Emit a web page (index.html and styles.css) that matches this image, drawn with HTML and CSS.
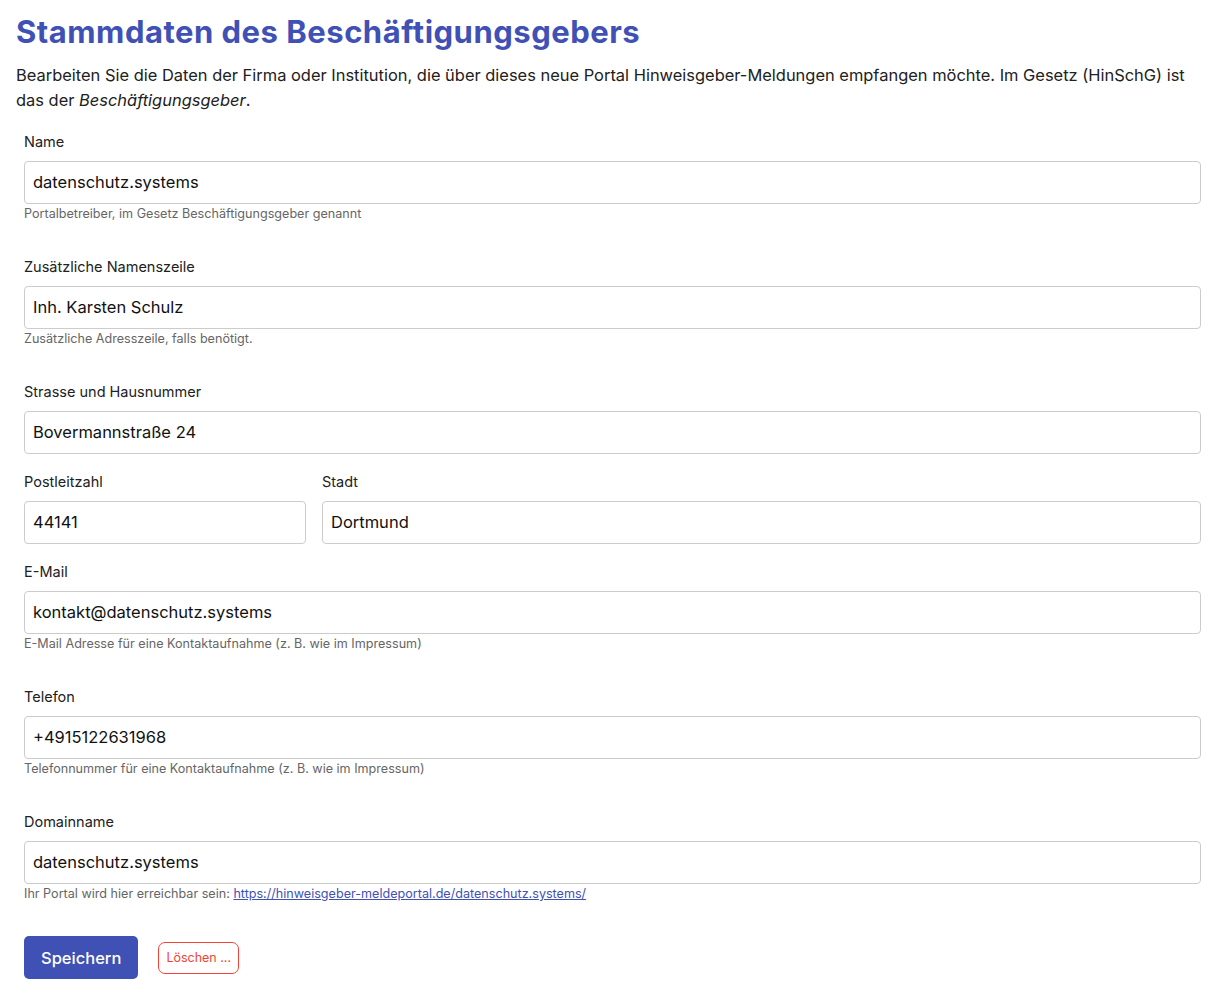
FILE: index.html
```html
<!DOCTYPE html>
<html lang="de">
<head>
    <meta charset="utf-8">
    <title>Stammdaten des Beschäftigungsgebers</title>
    <link rel="stylesheet" href="styles.css">
</head>
<body>
    <div class="page">
        <h1 class="page-title">Stammdaten des Beschäftigungsgebers</h1>
        <p class="intro">Bearbeiten Sie die Daten der Firma oder Institution, die über dieses neue Portal Hinweisgeber-Meldungen empfangen möchte. Im Gesetz (HinSchG) ist das der <em>Beschäftigungsgeber</em>.</p>

        <form class="master-form">
            <!-- Name -->
            <div class="field">
                <label for="name">Name</label>
                <input type="text" id="name" value="datenschutz.systems">
                <div class="help">Portalbetreiber, im Gesetz Beschäftigungsgeber genannt</div>
            </div>

            <div class="field">
                <label for="name2">Zusätzliche Namenszeile</label>
                <input type="text" id="name2" value="Inh. Karsten Schulz">
                <div class="help">Zusätzliche Adresszeile, falls benötigt.</div>
            </div>

            <div class="field">
                <label for="street">Strasse und Hausnummer</label>
                <input type="text" id="street" value="Bovermannstraße 24">
            </div>

            <!-- PLZ / Stadt -->
            <div class="row">
                <div class="field col-zip">
                    <label for="zip">Postleitzahl</label>
                    <input type="text" id="zip" value="44141">
                </div>
                <div class="field col-city">
                    <label for="city">Stadt</label>
                    <input type="text" id="city" value="Dortmund">
                </div>
            </div>

            <div class="field">
                <label for="email">E-Mail</label>
                <input type="text" id="email" value="kontakt@datenschutz.systems">
                <div class="help">E-Mail Adresse für eine Kontaktaufnahme (z. B. wie im Impressum)</div>
            </div>

            <div class="field">
                <label for="phone">Telefon</label>
                <input type="text" id="phone" value="+4915122631968">
                <div class="help">Telefonnummer für eine Kontaktaufnahme (z. B. wie im Impressum)</div>
            </div>

            <div class="field">
                <label for="domain">Domainname</label>
                <input type="text" id="domain" value="datenschutz.systems">
                <div class="help">Ihr Portal wird hier erreichbar sein: <a href="#">https://hinweisgeber-meldeportal.de/datenschutz.systems/</a></div>
            </div>

            <div class="actions">
                <button type="submit" class="btn-save">Speichern</button>
                <button type="button" class="btn-delete">Löschen ...</button>
            </div>
        </form>
    </div>
</body>
</html>
```

FILE: styles.css
```css
body {
    margin: 0;
    padding: 0;
    font-family: "Inter", "Liberation Sans", sans-serif;
    color: #212121;
    background: #ffffff;
}

.page {
    padding: 0 11px 0 16px;
}

.page-title {
    margin: 13px 0 0 0;
    font-size: 31px;
    line-height: 38px;
    font-weight: 700;
    letter-spacing: 0.5px;
    color: #3f51b5;
}

.intro {
    margin: 12px 0 18px 0;
    font-size: 16.45px;
    line-height: 25px;
}

.master-form {
    padding: 0 8px;
}

.field {
    margin-bottom: 17px;
}

.field label {
    display: block;
    font-size: 14.5px;
    line-height: 22px;
    margin-bottom: 8px;
}

.field input {
    display: block;
    box-sizing: border-box;
    width: 100%;
    height: 43px;
    padding: 0 8px 2px 8px;
    font-family: inherit;
    font-size: 16.5px;
    color: #111;
    border: 1px solid #cccccc;
    border-radius: 4px;
}

.help {
    font-size: 12.6px;
    line-height: 18px;
    color: #666666;
    margin: 1px 0 33px 0;
}

.help a {
    color: #3f51b5;
}

.row {
    display: flex;
    gap: 16px;
}

.col-zip {
    width: 282px;
}

.col-city {
    flex: 1;
}

.actions {
    display: flex;
    align-items: center;
    gap: 20px;
    margin-top: 29px;
}

.btn-save {
    height: 43px;
    padding: 0 17px;
    font-family: inherit;
    font-size: 16.5px;
    font-weight: 500;
    color: #ffffff;
    background: #3f51b5;
    border: 0;
    border-radius: 5px;
}

.btn-delete {
    height: 32px;
    padding: 0 7px;
    font-family: inherit;
    font-size: 12.5px;
    color: #f44336;
    background: #ffffff;
    border: 1px solid #f44336;
    border-radius: 7px;
}
```
